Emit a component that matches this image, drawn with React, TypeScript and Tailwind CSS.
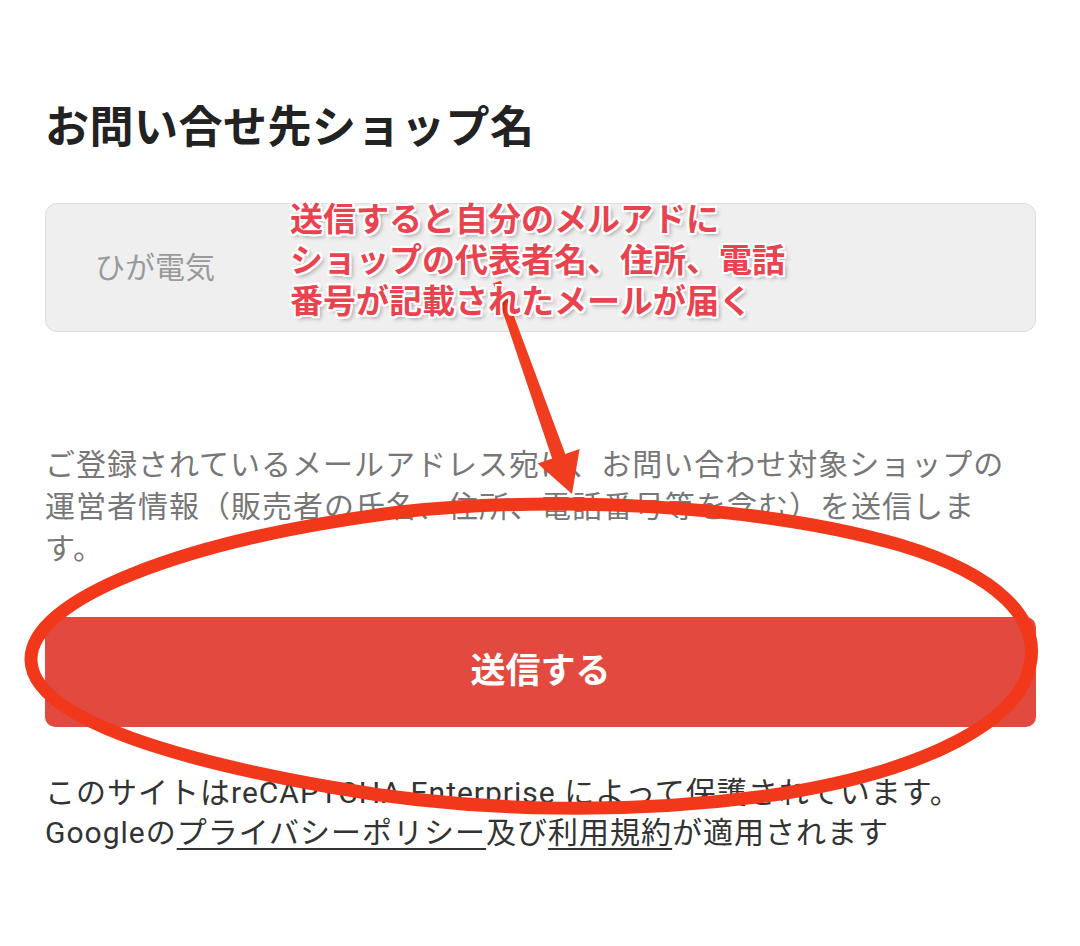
import React from "react";

const jp = "font-['Roboto','Noto_Sans_CJK_JP',sans-serif]";

function Annotations() {
  return (
    <>
      <svg
        className="absolute left-0 top-0 pointer-events-none"
        width={1080}
        height={946}
        viewBox="0 0 1080 946"
      >
        <polygon
          points="500.8,280.7 493.2,283.3 552.1,458.6 537.6,463.6 572,494 579.6,449 565.3,454"
          fill="#f03c1f"
        />
      </svg>
      <div
        className={`absolute left-[290px] top-[199px] text-[33px] leading-[41px] font-bold text-[#e8434e] ${jp} [text-shadow:2px_0_0_#fff,-2px_0_0_#fff,0_2px_0_#fff,0_-2px_0_#fff,2px_2px_0_#fff,-2px_-2px_0_#fff,2px_-2px_0_#fff,-2px_2px_0_#fff,3px_3px_4px_rgba(0,0,0,0.35)]`}
      >
        <div>送信すると自分のメルアドに</div>
        <div>ショップの代表者名、住所、電話</div>
        <div>番号が記載されたメールが届く</div>
      </div>
      <svg
        className="absolute left-0 top-0 pointer-events-none"
        width={1080}
        height={946}
        viewBox="0 0 1080 946"
      >
        <path
          d="M 31 660 C 30 600 180 540 400 512 C 560 495 760 505 900 545 C 1000 575 1040 620 1030 665 C 1020 720 930 770 780 794 C 640 814 480 814 330 787 C 160 757 32 715 31 660 Z"
          fill="none"
          stroke="#f2381b"
          strokeWidth={13}
        />
      </svg>
    </>
  );
}

export default function App() {
  return (
    <div className={`relative w-[1080px] h-[946px] bg-white overflow-hidden ${jp}`}>
      <div className="pl-[45px] pr-[44px] pt-[98px]">
        <h1 className="text-[44px] leading-[60px] font-bold tracking-[0.5px] text-[#222222]">
          お問い合せ先ショップ名
        </h1>

        <div className="mt-[45px] h-[129px] flex items-center rounded-[12px] border border-[#dcdcdc] bg-[#efefef] pl-[49px]">
          <span className="text-[30px] text-[#9a9a9a]">ひが電気</span>
        </div>

        <p className="mt-[112px] text-[30px] leading-[42px] tracking-[1px] text-[#777777]">
          ご登録されているメールアドレス宛に、お問い合わせ対象ショップの
          <br />
          運営者情報（販売者の氏名、住所、電話番号等を含む）を送信しま
          <br />
          す。
        </p>

        <button className="mt-[47px] w-full h-[110px] rounded-[10px] bg-[#e2493f] text-white text-[35px] font-bold flex items-center justify-center">
          送信する
        </button>

        <div className="mt-[46px] text-[30px] leading-[40px] tracking-[1px] text-[#333333]">
          <div>このサイトはreCAPTCHA Enterprise によって保護されています。</div>
          <div>
            Googleの
            <span className="underline underline-offset-[5px] decoration-2">プライバシーポリシー</span>
            及び
            <span className="underline underline-offset-[5px] decoration-2">利用規約</span>
            が適用されます
          </div>
        </div>
      </div>
      <Annotations />
    </div>
  );
}
